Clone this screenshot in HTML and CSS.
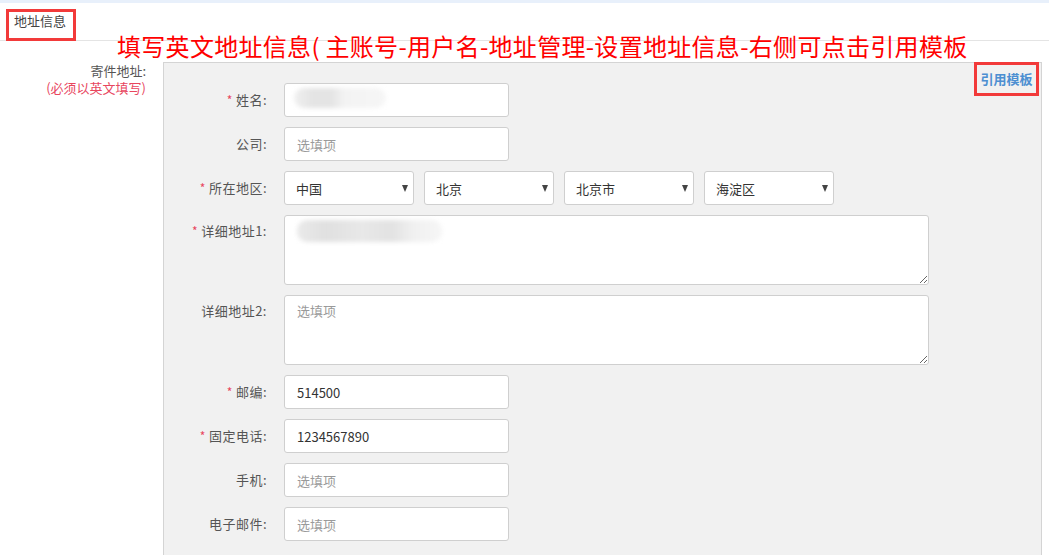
FILE: index.html
```html
<!DOCTYPE html>
<html lang="zh-CN">
<head>
<meta charset="utf-8">
<title>地址信息</title>
<link rel="stylesheet" href="styles.css">
</head>
<body>
<div class="top-band"></div>
<div class="header">
  <span class="tab">地址信息</span>
  <div class="note">填写英文地址信息( 主账号-用户名-地址管理-设置地址信息-右侧可点击引用模板</div>
</div>
<div class="section">
  <div class="side">
    <div class="side-title">寄件地址:</div>
    <div class="side-hint">(必须以英文填写)</div>
  </div>
  <div class="panel">
    <a class="template-link">引用模板</a>
    <div class="row">
      <label class="lbl"><span class="req">*</span>姓名:</label>
      <div class="field">
        <input class="inp" type="text" value="">
        <div class="blur blur-name"></div>
      </div>
    </div>
    <div class="row">
      <label class="lbl">公司:</label>
      <input class="inp" type="text" placeholder="选填项">
    </div>
    <div class="row">
      <label class="lbl"><span class="req">*</span>所在地区:</label>
      <div class="selects">
        <div class="sel"><select><option>中国</option></select></div>
        <div class="sel"><select><option>北京</option></select></div>
        <div class="sel"><select><option>北京市</option></select></div>
        <div class="sel"><select><option>海淀区</option></select></div>
      </div>
    </div>
    <div class="row row-top">
      <label class="lbl"><span class="req">*</span>详细地址1:</label>
      <div class="field">
        <textarea class="ta"></textarea>
        <div class="blur blur-addr"></div>
      </div>
    </div>
    <div class="row row-top">
      <label class="lbl">详细地址2:</label>
      <textarea class="ta" placeholder="选填项"></textarea>
    </div>
    <div class="row">
      <label class="lbl"><span class="req">*</span>邮编:</label>
      <input class="inp" type="text" value="514500">
    </div>
    <div class="row">
      <label class="lbl"><span class="req">*</span>固定电话:</label>
      <input class="inp" type="text" value="1234567890">
    </div>
    <div class="row">
      <label class="lbl">手机:</label>
      <input class="inp" type="text" placeholder="选填项">
    </div>
    <div class="row">
      <label class="lbl">电子邮件:</label>
      <input class="inp" type="text" placeholder="选填项">
    </div>
  </div>
</div>
</body>
</html>
```
FILE: styles.css
```css
html, body {
  margin: 0;
  padding: 0;
  background: #fff;
  overflow: hidden;
  height: 555px;
}
body {
  font-family: "Noto Sans CJK SC", "Liberation Sans", sans-serif;
  font-size: 13px;
  color: #555;
}
.top-band {
  height: 3px;
  background: #e8f0fb;
}
.header {
  position: relative;
  height: 37px;
  border-bottom: 1px solid #e4e4e4;
}
.tab {
  position: absolute;
  left: 6px;
  top: 6px;
  box-sizing: border-box;
  width: 70px;
  height: 32px;
  border: 3px solid #f23a3a;
  padding: 0 0 0 5px;
  line-height: 17px;
  color: #444;
  font-size: 13px;
}
.note {
  position: absolute;
  left: 117px;
  top: 29px;
  color: #ff0000;
  font-size: 24px;
  line-height: 28px;
  white-space: nowrap;
  letter-spacing: 0.3px;
}
.section {
  display: flex;
  align-items: flex-start;
  padding-top: 21px;
}
.side {
  width: 163px;
  flex: none;
  box-sizing: border-box;
  padding-right: 17px;
  text-align: right;
  padding-top: 1px;
}
.side-title {
  line-height: 16px;
  color: #555;
}
.side-hint {
  line-height: 17px;
  color: #e8465e;
}
.panel {
  position: relative;
  width: 877px;
  height: 472px;
  flex: none;
  background: #f1f1f1;
  border: 1px solid #d4d4d4;
  border-bottom: none;
  padding-top: 20px;
  box-sizing: content-box;
  display: flex;
  flex-direction: column;
  gap: 10px;
}
.template-link {
  position: absolute;
  right: 2px;
  top: -1px;
  box-sizing: border-box;
  width: 65px;
  height: 34px;
  border: 3px solid #f23a3a;
  color: #4d8fd1;
  font-weight: bold;
  font-size: 13px;
  line-height: 28px;
  text-align: center;
}
.row {
  display: flex;
  align-items: center;
}
.row-top {
  align-items: flex-start;
}
.row-top .lbl {
  padding-top: 7px;
}
.lbl {
  width: 120px;
  flex: none;
  box-sizing: border-box;
  padding-right: 17px;
  text-align: right;
  color: #555;
  line-height: 18px;
  letter-spacing: 0.5px;
}
.req {
  color: #e8465e;
  margin-right: 3px;
  font-size: 12px;
}
.field {
  position: relative;
}
.inp {
  display: block;
  box-sizing: border-box;
  width: 225px;
  height: 34px;
  border: 1px solid #cfcfcf;
  border-radius: 3px;
  background: #fff;
  padding: 0 12px;
  font-family: "Noto Sans CJK SC", "Liberation Sans", sans-serif;
  font-size: 13px;
  color: #333;
  outline: none;
}
.inp::placeholder, .ta::placeholder {
  color: #9a9a9a;
}
.ta {
  display: block;
  box-sizing: border-box;
  width: 645px;
  height: 70px;
  border: 1px solid #cfcfcf;
  border-radius: 3px;
  background: #fff;
  padding: 5px 12px;
  font-family: "Noto Sans CJK SC", "Liberation Sans", sans-serif;
  font-size: 13px;
  color: #333;
  resize: vertical;
  outline: none;
}
.selects {
  display: flex;
  gap: 10px;
}
.sel {
  position: relative;
  width: 130px;
  height: 34px;
}
.sel select {
  appearance: none;
  -webkit-appearance: none;
  box-sizing: border-box;
  width: 130px;
  height: 34px;
  border: 1px solid #cfcfcf;
  border-radius: 3px;
  background: #fff;
  padding: 0 11px;
  font-family: "Noto Sans CJK SC", "Liberation Sans", sans-serif;
  font-size: 13px;
  color: #333;
  outline: none;
}
.sel::after {
  content: "";
  position: absolute;
  right: 6px;
  top: 14px;
  border-left: 3.5px solid transparent;
  border-right: 3.5px solid transparent;
  border-top: 7px solid #444;
  pointer-events: none;
}
.blur {
  position: absolute;
  background: #e6e6e6;
  border-radius: 10px;
  filter: blur(2px);
  pointer-events: none;
}
.blur-name {
  left: 10px;
  top: 5px;
  width: 92px;
  height: 20px;
  background: linear-gradient(90deg, #f0f0f0 0%, #e4e4e4 20%, #e4e4e4 40%, #f3f3f3 55%, #f6f6f6 100%);
}
.blur-addr {
  left: 13px;
  top: 5px;
  width: 145px;
  height: 22px;
  background: linear-gradient(90deg, #eaeaea 0%, #e0e0e0 20%, #e8e8e8 45%, #e2e2e2 65%, #f0f0f0 80%, #f6f6f6 100%);
}
```
